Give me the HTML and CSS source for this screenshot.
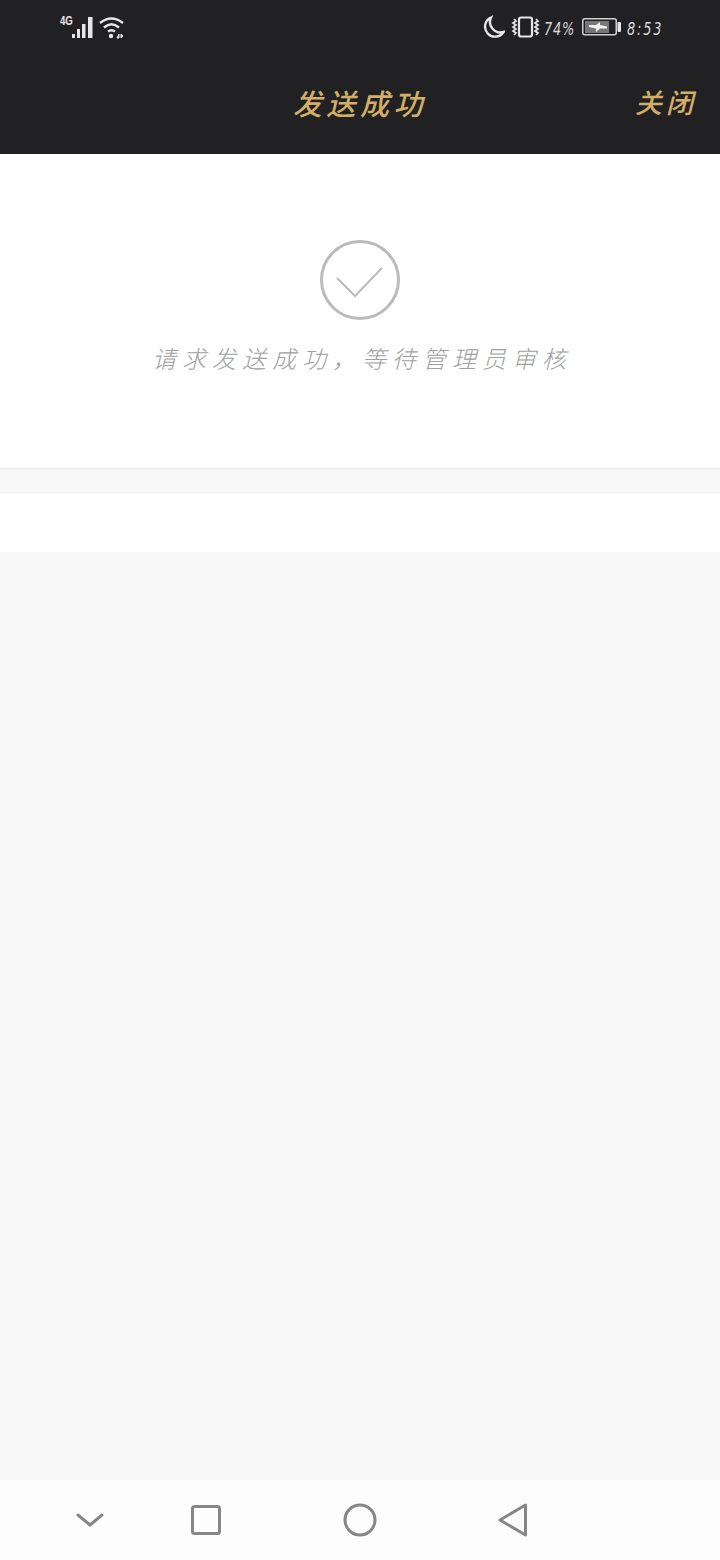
FILE: index.html
```html
<!DOCTYPE html>
<html lang="zh-CN">
<head>
    <meta charset="UTF-8">
    <meta name="viewport" content="width=device-width, initial-scale=1.0">
    <title>发送成功</title>
    <link rel="stylesheet" href="styles.css">
</head>
<body>
    <div class="page">
        <!-- Cabecera -->
        <div class="header">
            <div class="status">
                <div class="status-left">
                    <span class="net">4G</span>
                    <svg class="signal" width="22" height="24" viewBox="0 0 22 24" fill="#e6e6e6">
                        <rect x="0" y="17" width="3" height="4"/>
                        <rect x="5" y="12" width="3" height="9"/>
                        <rect x="10" y="7" width="3.5" height="14"/>
                        <rect x="16" y="0" width="4.5" height="21"/>
                    </svg>
                    <svg class="wifi" width="26" height="24" viewBox="0 0 26 24" fill="none" stroke="#e6e6e6" stroke-width="2.4">
                        <path d="M1 7 Q12.5 -2 24 7"/>
                        <path d="M5 11.5 Q12.5 5 20 11.5"/>
                        <path d="M9 15.5 Q12.5 13 16 15.5"/>
                        <circle cx="12" cy="20" r="2.2" fill="#e6e6e6" stroke="none"/>
                        <path d="M18 22 L20 18 L20 22 Z M22 18 L24 20 L22 22 Z" fill="#e6e6e6" stroke="#e6e6e6" stroke-width="1"/>
                    </svg>
                </div>
                <div class="status-right">
                    <svg class="moon" width="22" height="24" viewBox="0 0 22 24" fill="none" stroke="#e6e6e6" stroke-width="2.4">
                        <path d="M8 2.5 A10 10 0 1 0 20.5 17 A10.5 10.5 0 0 1 8 2.5 Z"/>
                    </svg>
                    <svg class="vibrate" width="29" height="24" viewBox="0 0 29 24" fill="none" stroke="#e6e6e6">
                        <rect x="8" y="2.5" width="13" height="19" rx="2" stroke-width="2.2"/>
                        <path d="M3 4 l2 2 l-3 2 l3 2 l-3 2 l3 2 l-3 2 l3 2 l-2 2" stroke-width="1.7"/>
                        <path d="M25 4 l2 2 l-3 2 l3 2 l-3 2 l3 2 l-3 2 l3 2 l-2 2" stroke-width="1.7"/>
                    </svg>
                    <span class="pct">74%</span>
                    <svg class="battery" width="39" height="20" viewBox="0 0 39 20">
                        <rect x="0.75" y="1.75" width="33.5" height="16" rx="2" fill="none" stroke="#cfcfcf" stroke-width="1.5"/>
                        <rect x="3" y="4" width="24" height="12" fill="#777"/>
                        <path d="M7 8 L14 8 L18 5 L18 8 L25 9.5 L25 11.5 L18 11.5 L14 15 L14 11.5 L7 10 Z" fill="#f2f2f2"/>
                        <rect x="35.5" y="5" width="3.5" height="10" rx="1" fill="#e6e6e6"/>
                    </svg>
                    <span class="time">8:53</span>
                </div>
            </div>
            <div class="titlebar">
                <h1 class="title">发送成功</h1>
                <a class="close">关闭</a>
            </div>
        </div>

        <!-- Resultado -->
        <div class="result">
            <svg class="check" width="80" height="80" viewBox="0 0 80 80" fill="none" stroke="#bbb">
                <circle cx="40" cy="40" r="38.5" stroke-width="3"/>
                <path d="M17 38 L35 56 L62 28" stroke-width="2"/>
            </svg>
            <p class="message">请求发送成功，等待管理员审核</p>
        </div>
        <div class="divider"></div>
        <div class="blank"></div>
        <div class="filler"></div>

        <!-- Barra de navegacion -->
        <div class="navbar">
            <svg class="nav-down" width="28" height="18" viewBox="0 0 28 18" fill="none" stroke="#868686" stroke-width="3" stroke-linecap="round" stroke-linejoin="round">
                <path d="M2 4 L14 14 L26 4"/>
            </svg>
            <svg class="nav-square" width="30" height="30" viewBox="0 0 30 30" fill="none" stroke="#868686" stroke-width="3">
                <rect x="1.5" y="1.5" width="27" height="27" rx="2"/>
            </svg>
            <svg class="nav-circle" width="34" height="34" viewBox="0 0 34 34" fill="none" stroke="#868686" stroke-width="3">
                <circle cx="17" cy="17" r="15"/>
            </svg>
            <svg class="nav-back" width="30" height="34" viewBox="0 0 30 34" fill="none" stroke="#868686" stroke-width="3" stroke-linejoin="round">
                <path d="M2 17 L27.5 2 L27.5 32 Z"/>
            </svg>
        </div>
    </div>
</body>
</html>
```

FILE: styles.css
```css
html, body { margin: 0; padding: 0; }
body { font-family: "Noto Sans CJK SC", "Liberation Sans", sans-serif; background: #f8f8f8; }
.page { width: 720px; height: 1560px; display: flex; flex-direction: column; }

.header { height: 154px; background: #212123; }
.status { height: 54px; display: flex; justify-content: space-between; align-items: center; padding: 0 59px 0 60px; }
.status-left, .status-right { display: flex; align-items: center; }
.net { font-family: "Liberation Sans", sans-serif; font-size: 12px; font-weight: bold; color: #e6e6e6; width: 12px; margin-top: -12px; transform: scaleX(0.8); transform-origin: left; }
.signal { margin: 3px 5px 0 0; }
.wifi { margin-top: 1px; }
.status-right svg { display: block; }
.moon { margin-right: 6px; }
.pct, .time { font-family: "DejaVu Sans", sans-serif; font-size: 18px; font-style: italic; font-weight: 200; color: #d8d8d8; }
.pct { width: 38px; margin: 2px 0 0 4px; letter-spacing: 1px; transform: scaleX(0.72); transform-origin: left; white-space: nowrap; }
.battery { margin-right: 6px; }
.time { width: 34px; margin-top: 2px; letter-spacing: 2.5px; transform: scaleX(0.72); transform-origin: left; white-space: nowrap; }

.titlebar { height: 100px; display: flex; justify-content: center; position: relative; }
.title { margin: 29px 0 0; font-size: 29px; line-height: 38px; font-weight: 500; font-style: italic; letter-spacing: 4.5px; color: #d2ae66; }
.close { position: absolute; top: 29px; right: 23px; font-size: 27px; line-height: 38px; font-weight: 500; font-style: italic; letter-spacing: 4px; color: #d2ae66; }

.result { height: 314px; background: #fff; display: flex; flex-direction: column; align-items: center; padding-top: 86px; box-sizing: border-box; }
.check { display: block; }
.message { margin: 20px 0 0; font-size: 24px; line-height: 36px; font-weight: 300; font-style: italic; letter-spacing: 6px; padding-left: 4px; color: #a0a0a0; white-space: nowrap; }

.divider { height: 23px; background: #f8f8f8; border-top: 1px solid #e8e8e8; border-bottom: 1px solid #eee; }
.blank { height: 59px; background: #fff; }
.filler { flex: 1; background: #f8f8f8; }

.navbar { height: 80px; background: #fdfdfd; display: flex; align-items: center; padding-left: 76px; }
.nav-square { margin-left: 87px; }
.nav-circle { margin-left: 122px; }
.nav-back { margin-left: 121px; }
```
